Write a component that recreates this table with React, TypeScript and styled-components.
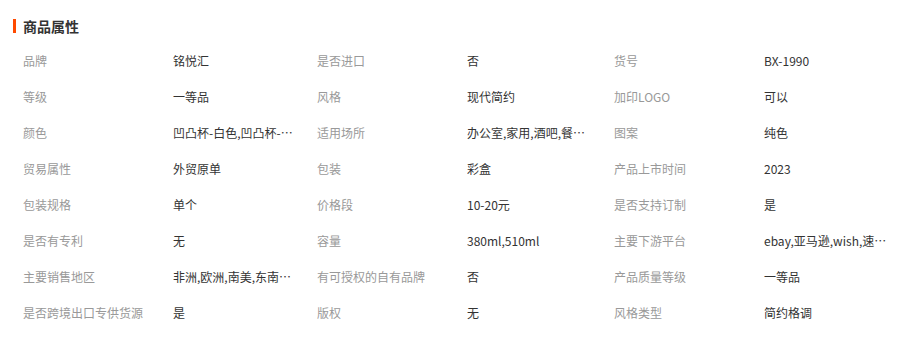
import React from "react";
import styled, { createGlobalStyle } from "styled-components";

const Global = createGlobalStyle`
  html, body { margin: 0; padding: 0; background: #fff; }
  body { font-family: "Noto Sans CJK SC", "Noto Sans", "Liberation Sans", sans-serif; }
`;

const Wrapper = styled.div`
  width: 910px;
  padding: 12px 13px 0;
  box-sizing: border-box;
`;

const Header = styled.div`
  display: flex;
  align-items: center;
  height: 28px;
`;

const Bar = styled.span`
  width: 3px;
  height: 14px;
  background: #ff4a00;
  margin-right: 7px;
`;

const Title = styled.h2`
  margin: 0;
  font-size: 14px;
  font-weight: 700;
  color: #333;
  line-height: 28px;
`;

const Grid = styled.div`
  margin-top: 3px;
  padding-left: 10px;
  display: grid;
  grid-template-columns: 150px 144px 150px 147px 150px 1fr;
  grid-auto-rows: 36px;
  align-items: center;
`;

const Label = styled.div`
  font-size: 12px;
  color: #999;
  line-height: 16px;
  white-space: nowrap;
`;

const Value = styled.div`
  font-size: 12px;
  color: #333;
  line-height: 16px;
  max-width: 125px;
  white-space: nowrap;
  overflow: hidden;
  text-overflow: ellipsis;
`;

const rows: [string, string][][] = [
  [["品牌", "铭悦汇"], ["是否进口", "否"], ["货号", "BX-1990"]],
  [["等级", "一等品"], ["风格", "现代简约"], ["加印LOGO", "可以"]],
  [["颜色", "凹凸杯-白色,凹凸杯-黑色,凹凸杯-粉色"], ["适用场所", "办公室,家用,酒吧,餐厅,会所"], ["图案", "纯色"]],
  [["贸易属性", "外贸原单"], ["包装", "彩盒"], ["产品上市时间", "2023"]],
  [["包装规格", "单个"], ["价格段", "10-20元"], ["是否支持订制", "是"]],
  [["是否有专利", "无"], ["容量", "380ml,510ml"], ["主要下游平台", "ebay,亚马逊,wish,速卖通"]],
  [["主要销售地区", "非洲,欧洲,南美,东南亚,北美"], ["有可授权的自有品牌", "否"], ["产品质量等级", "一等品"]],
  [["是否跨境出口专供货源", "是"], ["版权", "无"], ["风格类型", "简约格调"]],
];

export default function App() {
  return (
    <>
      <Global />
      <Wrapper>
        <Header>
          <Bar />
          <Title>商品属性</Title>
        </Header>
        <Grid>
          {rows.flatMap((row, ri) =>
            row.flatMap(([k, v], ci) => [
              <Label key={`l${ri}-${ci}`}>{k}</Label>,
              <Value key={`v${ri}-${ci}`}>{v}</Value>,
            ])
          )}
        </Grid>
      </Wrapper>
    </>
  );
}
